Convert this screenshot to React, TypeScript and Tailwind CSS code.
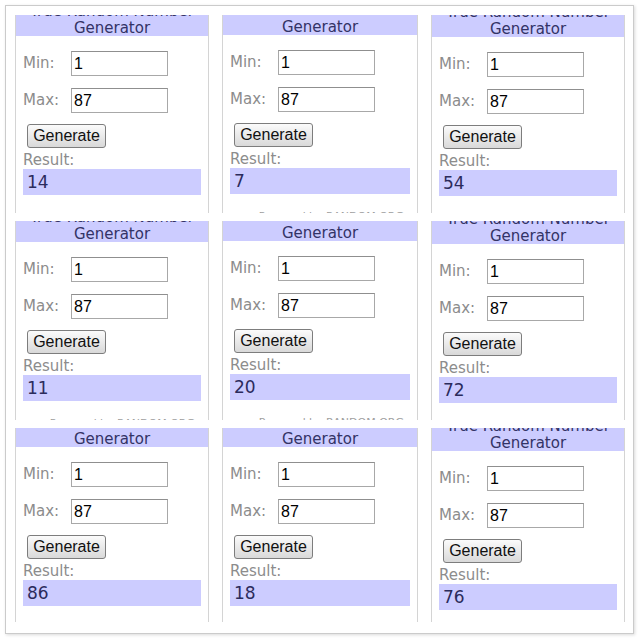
type Cell = {
  n: string;
  partial: boolean;
  head: string;
};

const cells: Cell[] = [
  { n: '14', partial: true, head: 'h-[21px]' },
  { n: '7', partial: false, head: 'h-[20px]' },
  { n: '54', partial: true, head: 'h-[22px]' },
  { n: '11', partial: true, head: 'h-[21px]' },
  { n: '20', partial: false, head: 'h-[20px]' },
  { n: '72', partial: true, head: 'h-[23px]' },
  { n: '86', partial: false, head: 'h-[19px]' },
  { n: '18', partial: false, head: 'h-[19px]' },
  { n: '76', partial: true, head: 'h-[23px]' },
];

const verdana = "font-['DejaVu_Sans',Verdana,sans-serif]";
const arial = "font-['Liberation_Sans',Arial,sans-serif]";

function Field({ label, value }: { label: string; value: string }) {
  return (
    <div className="flex h-[25px] items-center">
      <span className={`w-[48px] text-[15px] text-[#8c8c8c] ${verdana}`}>{label}</span>
      <div
        className={`flex h-[25px] w-[97px] items-center border border-[#a8a8a8] border-t-[#8f8f8f] bg-white pl-[2px] text-[16px] text-black ${arial}`}
      >
        {value}
      </div>
    </div>
  );
}

function Widget({ cell }: { cell: Cell }) {
  return (
    <div className="h-full overflow-hidden border-x border-[#d4d4d4] bg-white">
      <div
        className={`flex flex-col items-center justify-end overflow-hidden bg-[#ccccff] text-[15px] leading-[16px] text-[#333366] ${verdana} ${cell.head}`}
      >
        {cell.partial && <span className="mb-[1px] whitespace-nowrap">True Random Number</span>}
        <span>Generator</span>
      </div>
      <div className="px-[7px]">
        <div className="mt-[15px]">
          <Field label="Min:" value="1" />
        </div>
        <div className="mt-[12px]">
          <Field label="Max:" value="87" />
        </div>
        <button
          className={`mt-[11px] ml-[4px] flex h-[24px] w-[79px] items-center justify-center rounded-[3px] border border-[#7d7d7d] bg-gradient-to-b from-[#fbfbfb] to-[#d9d9d9] text-[16px] text-[#111] ${arial}`}
        >
          Generate
        </button>
        <div className={`mt-[3px] text-[15px] leading-[18px] text-[#8c8c8c] ${verdana}`}>Result:</div>
        <div
          className={`h-[26px] bg-[#ccccff] pl-[4px] text-[17px] leading-[26px] text-[#2b2b5c] ${verdana}`}
        >
          {cell.n}
        </div>
        <div className={`mt-[15px] pr-[6px] text-right text-[11px] text-[#a0a0a0] ${verdana}`}>
          Powered by RANDOM.ORG
        </div>
      </div>
    </div>
  );
}

export default function App() {
  return (
    <div className="h-[640px] w-[640px] bg-white p-[5px]">
      <div className="h-[629px] w-[629px] border border-[#cbcbcb] pt-[9px] pl-[9px] shadow-[1px_1px_3px_rgba(0,0,0,0.15)]">
        <div className="grid grid-cols-[194px_196px_194px] grid-rows-[198px_199px_194px] gap-x-[13px] gap-y-[8px]">
          {cells.map((c, i) => (
            <Widget key={i} cell={c} />
          ))}
        </div>
      </div>
    </div>
  );
}
